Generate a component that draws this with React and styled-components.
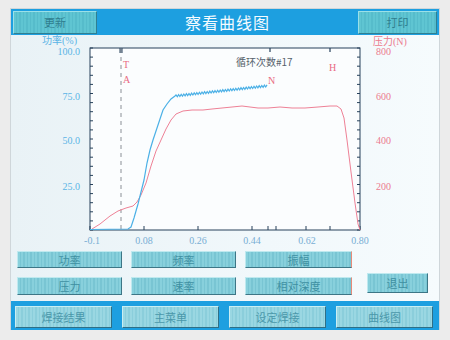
import styled, { createGlobalStyle } from 'styled-components'

const GlobalStyle = createGlobalStyle`
    body {
        margin: 0;
        background: #ececec;
        font-family: "Noto Sans CJK SC", "Liberation Sans", sans-serif;
    }
`

const stripes = (a, b) => `repeating-linear-gradient(90deg, ${a} 0 2px, ${b} 2px 3px, ${a} 3px 5px, ${b} 5px 7px)`

// blue power curve with the ripple on its plateau
function powerPath() {
    const pts = [
        [90, 229.5], [128, 229], [131, 227], [134, 218], [138, 204], [141, 192],
        [144, 180], [147, 163], [150, 150], [153, 140], [157, 128], [160, 119],
        [163, 110], [167, 104], [171, 99], [175, 96],
    ]
    let i = 0
    for (let x = 176; x <= 268; x += 1.3) {
        const y = 96 - (x - 175) * 0.11 + (i % 2 ? 1 : -1)
        pts.push([x, y])
        i++
    }
    return 'M' + pts.map(p => p[0].toFixed(1) + ',' + p[1].toFixed(1)).join(' L')
}

const forcePath = 'M92,229 L100,224 L110,216 L118,211 L126,208 L133,206 L137,202 L141,195 L146,183 L151,166 L156,151 L161,140 L166,129 L171,120 L176,114 L183,111 L192,110 L203,110 L212,109 L222,108 L232,107 L242,106 L250,107 L258,108 L268,108 L280,107 L292,108 L305,108 L318,107 L330,106 L337,106 L341,109 L344,118 L347,140 L351,172 L355,203 L358,224 L360,230'

const leftTicks = Array.from({ length: 21 }, (_, i) => 48 + i * 9.1)
const bottomTicks = [90, 144, 198, 252, 268, 276, 306, 330, 360]

const Chart = () => (
    <ChartSvg viewBox="11 35 428 212">
        <rect x="90" y="48" width="270" height="182" fill="#fbfdfe" stroke="#26405a" strokeWidth="1" />
        {leftTicks.map(y => (
            <g key={y}>
                <line x1="90" y1={y} x2="93" y2={y} stroke="#26405a" strokeWidth="1" />
                <line x1="357" y1={y} x2="360" y2={y} stroke="#26405a" strokeWidth="1" />
            </g>
        ))}
        {bottomTicks.map(x => (
            <line key={x} x1={x} y1="230" x2={x} y2="226" stroke="#26405a" strokeWidth="1" />
        ))}
        <line x1="270" y1="48" x2="270" y2="52" stroke="#26405a" strokeWidth="1.2" />
        <line x1="330" y1="48" x2="330" y2="52" stroke="#26405a" strokeWidth="1.2" />
        <line x1="121" y1="49" x2="121" y2="229" stroke="#8a8f96" strokeWidth="1" strokeDasharray="4 4" />
        <line x1="120" y1="48" x2="120" y2="53" stroke="#26405a" strokeWidth="1" />
        <line x1="122" y1="48" x2="122" y2="53" stroke="#26405a" strokeWidth="1" />

        <path d={forcePath} fill="none" stroke="#ee8196" strokeWidth="1" />
        <path d={powerPath()} fill="none" stroke="#4bb0e6" strokeWidth="1.2" />

        <AxisText x="42" y="44" fill="#5ab4e6">功率(%)</AxisText>
        {[['100.0', 55], ['75.0', 100], ['50.0', 144], ['25.0', 190]].map(([t, y]) => (
            <AxisText key={t} x="80" y={y} fill="#5ab4e6" textAnchor="end">{t}</AxisText>
        ))}
        <AxisText x="373" y="45" fill="#ec7a8e">压力(N)</AxisText>
        {[['800', 55], ['600', 100], ['400', 144], ['200', 190]].map(([t, y]) => (
            <AxisText key={t} x="376" y={y} fill="#ec7a8e">{t}</AxisText>
        ))}
        {[['-0.1', 92], ['0.08', 144], ['0.26', 198], ['0.44', 252], ['0.62', 307], ['0.80', 360]].map(([t, x]) => (
            <AxisText key={t} x={x} y="244" fill="#78aed4" textAnchor="middle">{t}</AxisText>
        ))}

        <AxisText x="123" y="68" fill="#e96a82">T</AxisText>
        <AxisText x="123" y="83" fill="#e96a82">A</AxisText>
        <AxisText x="268" y="84" fill="#e96a82">N</AxisText>
        <AxisText x="329" y="71" fill="#e96a82">H</AxisText>
        <LabelText x="236" y="66">循环次数#17</LabelText>
    </ChartSvg>
)

const App = () => (
    <>
        <GlobalStyle />
        <Screen>
            <Header>
                <HeadButton $w={84}>更新</HeadButton>
                <Title>察看曲线图</Title>
                <HeadButton $w={79}>打印</HeadButton>
            </Header>
            <Content>
                <Chart />
                <ButtonGrid>
                    <Key>功率</Key>
                    <Key>频率</Key>
                    <Key $edge>振幅</Key>
                    <span />
                    <Key>压力</Key>
                    <Key>速率</Key>
                    <Key $edge>相对深度</Key>
                    <ExitKey>退出</ExitKey>
                </ButtonGrid>
            </Content>
            <NavBar>
                <NavButton>焊接结果</NavButton>
                <NavButton>主菜单</NavButton>
                <NavButton>设定焊接</NavButton>
                <NavButton>曲线图</NavButton>
            </NavBar>
        </Screen>
    </>
)

const Screen = styled.div`
    width: 428px;
    margin: 9px 0 0 11px;
    display: flex;
    flex-direction: column;
    box-shadow: 0 0 0 1px #cfd6da;
`

const Header = styled.header`
    height: 26px;
    display: flex;
    align-items: center;
    padding: 0 2px;
    background: #1d9fe0;
`

const HeadButton = styled.div`
    width: ${p => p.$w}px;
    height: 23px;
    box-sizing: border-box;
    display: flex;
    align-items: center;
    justify-content: center;
    background: ${stripes('#5fc5d2', '#56bccb')};
    border: 1px solid #2f7f92;
    border-top-color: #9be0e8;
    border-left-color: #9be0e8;
    color: #2f7d8e;
    font-size: 11px;
`

const Title = styled.h1`
    flex: 1;
    margin: 0;
    text-align: center;
    color: #f4fbff;
    font-size: 16px;
    font-weight: 400;
    letter-spacing: 1px;
`

const Content = styled.div`
    height: 266px;
    display: flex;
    flex-direction: column;
    background: linear-gradient(90deg, #e9f2f6 0%, #f1f8fb 60%, #f6fbfd 100%);
`

const ChartSvg = styled.svg`
    display: block;
    width: 428px;
    height: 212px;
`

const AxisText = styled.text`
    font-family: "Liberation Serif", "Noto Sans CJK SC", serif;
    font-size: 10px;
`

const LabelText = styled.text`
    font-family: "Noto Sans CJK SC", sans-serif;
    font-size: 10px;
    fill: #56626c;
`

const ButtonGrid = styled.div`
    display: grid;
    grid-template-columns: 105px 105px 107px 1fr;
    grid-template-rows: 17px 18px;
    column-gap: 9px;
    row-gap: 9px;
    padding: 4px 0 0 6px;
`

const Key = styled.div`
    box-sizing: border-box;
    display: flex;
    align-items: center;
    justify-content: center;
    background: ${stripes('#88d0dc', '#79c5d3')};
    border: 1px solid #3d7686;
    border-top-color: #bfe9ef;
    border-left-color: #bfe9ef;
    border-right-color: ${p => (p.$edge ? '#e88a78' : '#3d7686')};
    color: #3f90a2;
    font-size: 11px;
`

const ExitKey = styled(Key)`
    width: 61px;
    height: 20px;
    margin: -4px 0 0 6px;
`

const NavBar = styled.nav`
    display: grid;
    grid-template-columns: repeat(4, 97px);
    column-gap: 10px;
    padding: 5px 4px 2px;
    background: #1d9fe0;
`

const NavButton = styled.div`
    height: 22px;
    box-sizing: border-box;
    display: flex;
    align-items: center;
    justify-content: center;
    background: ${stripes('#9ad7e2', '#8bcedb')};
    border: 1px solid #2f6f86;
    border-top-color: #c9eef3;
    border-left-color: #c9eef3;
    color: #4a98aa;
    font-size: 11px;
`

export default App
